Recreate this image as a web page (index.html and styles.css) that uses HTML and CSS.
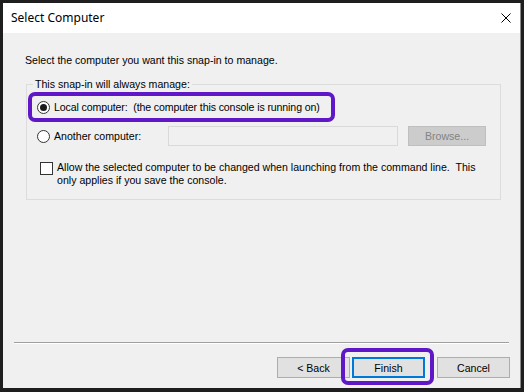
FILE: index.html
```html
<!DOCTYPE html>
<html>
<head>
<meta charset="utf-8">
<link rel="stylesheet" href="styles.css">
</head>
<body>
<div class="window">
  <div class="titlebar">
    <span class="title">Select Computer</span>
    <svg class="close" width="10" height="10" viewBox="0 0 10 10"><path d="M0.5 0.5 L9.5 9.5 M9.5 0.5 L0.5 9.5" stroke="#000" stroke-width="1" fill="none"/></svg>
  </div>
  <div class="content">
    <p class="intro">Select the computer you want this snap-in to manage.</p>
    <fieldset class="group">
      <legend>This snap-in will always manage:</legend>
      <div class="row row-local">
        <span class="radio checked"></span>
        <span class="label label-local">Local computer:&nbsp; (the computer this console is running on)</span>
        <span class="highlight hl-local"></span>
      </div>
      <div class="row row-other">
        <span class="radio"></span>
        <span class="label label-fixed">Another computer:</span>
        <span class="textbox"></span>
        <span class="btn btn-disabled">Browse...</span>
      </div>
      <div class="row row-check">
        <span class="checkbox"></span>
        <span class="check-text">Allow the selected computer to be changed when launching from the command line.&nbsp; This<br>only applies if you save the console.</span>
      </div>
    </fieldset>
    <div class="spacer"></div>
    <div class="separator"></div>
    <div class="buttons">
      <span class="btn">&lt; Back</span>
      <span class="btn-wrap">
        <span class="btn btn-default">Finish</span>
        <span class="highlight hl-finish"></span>
      </span>
      <span class="btn btn-cancel">Cancel</span>
    </div>
  </div>
</div>
</body>
</html>
```

FILE: styles.css
```css
* { box-sizing: border-box; }
html, body { margin: 0; padding: 0; }
body {
  width: 524px;
  height: 392px;
  background: #1e1e1e;
  padding: 3px 3px 4px 3px;
  font-family: "Liberation Sans", Arial, sans-serif;
  font-size: 10.6px;
  color: #000;
  overflow: hidden;
}
.window {
  height: 385px;
  background: #f0f0f0;
  display: flex;
  flex-direction: column;
  border-right: 1px solid #8a8a8a;
}
.titlebar {
  height: 30px;
  background: #fff;
  display: flex;
  align-items: center;
  padding: 0 9px 0 8px;
  flex: none;
}
.title {
  font-family: "Noto Sans", "Open Sans", sans-serif;
  font-size: 12px;
  flex: 1;
  padding-bottom: 1px;
}
.close { display: block; margin-bottom: 1px; }
.content {
  flex: 1;
  display: flex;
  flex-direction: column;
}
.intro {
  margin: 21px 0 0 22px;
  line-height: 13px;
}
.group {
  margin: 11px 19px 0 23px;
  padding: 0 0 12px 0;
  border: 1px solid #dcdcdc;
  min-width: 0;
}
.group legend {
  margin-left: 6px;
  padding: 0 2px;
  line-height: 13px;
}
.row {
  display: flex;
  align-items: center;
  position: relative;
  line-height: 13px;
}
.row-local {
  margin-top: 6px;
  height: 20px;
  padding-left: 10px;
}
.row-other {
  margin-top: 9px;
  height: 20px;
  padding-left: 10px;
}
.row-check {
  margin-top: 15px;
  padding-left: 13px;
  align-items: flex-start;
}
.radio {
  width: 13px;
  height: 13px;
  border: 1px solid #333;
  border-radius: 50%;
  background: #fff;
  position: relative;
  flex: none;
}
.radio.checked::after {
  content: "";
  position: absolute;
  left: 2px;
  top: 2px;
  width: 7px;
  height: 7px;
  border-radius: 50%;
  background: #1a1a1a;
}
.label { margin-left: 4px; }
.label-local { letter-spacing: -0.12px; }
.label-fixed { width: 114px; flex: none; }
.textbox {
  width: 230px;
  height: 20px;
  border: 1px solid #d9d9d9;
  background: #f0f0f0;
  flex: none;
}
.btn {
  display: flex;
  align-items: center;
  justify-content: center;
  width: 73px;
  height: 21px;
  background: #e1e1e1;
  border: 1px solid #adadad;
  flex: none;
}
.btn-disabled {
  margin-left: 10px;
  width: 78px;
  height: 20px;
  background: #cccccc;
  border-color: #bfbfbf;
  color: #838383;
}
.checkbox {
  width: 13px;
  height: 13px;
  border: 1px solid #333;
  background: #fff;
  margin-top: 1px;
  flex: none;
}
.check-text { margin-left: 4px; }
.highlight {
  position: absolute;
  border: 4px solid #5f17c7;
  border-radius: 7px;
}
.hl-local {
  left: 1px;
  top: -5px;
  width: 307px;
  height: 30px;
}
.spacer { flex: 1; }
.separator {
  margin: 0 11px;
  height: 2px;
  border-top: 1px solid #a0a0a0;
  border-bottom: 1px solid #fff;
}
.buttons {
  display: flex;
  justify-content: flex-end;
  margin: 13px 10px 10px 0;
  gap: 2px;
}
.btn-wrap { position: relative; }
.btn-default {
  border: 1px solid #0078d7;
  box-shadow: inset 0 0 0 1px #0078d7;
}
.btn-cancel { margin-left: 10px; }
.hl-finish {
  left: -11px;
  top: -9px;
  width: 93px;
  height: 37px;
}
```
